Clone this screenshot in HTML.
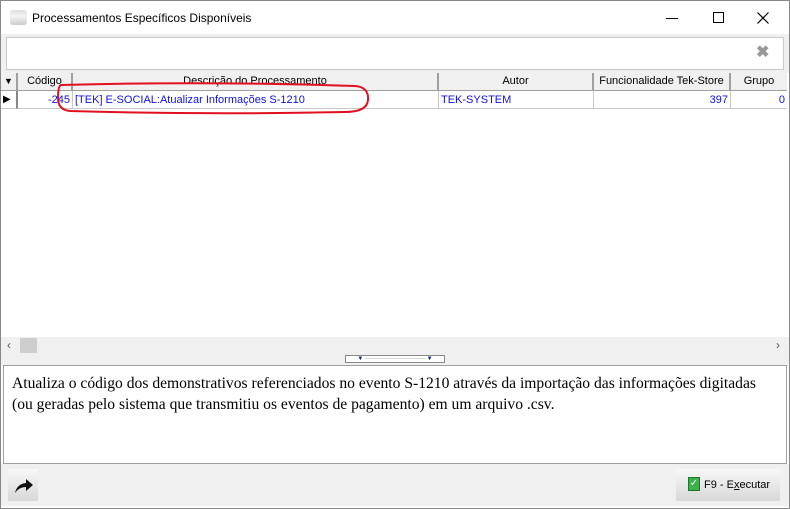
<!DOCTYPE html><html><head><style>
*{margin:0;padding:0;box-sizing:border-box}
body{width:790px;height:509px;background:#fff;font-family:"Liberation Sans",sans-serif;font-size:11px;position:relative;overflow:hidden}
.a{position:absolute}
.hd{position:absolute;top:73px;height:18px;background:#f0f0f0;border-right:2px solid #a0a0a0;text-align:center;line-height:17px;color:#000;font-size:11px;border-bottom:1px solid #a0a0a0}
.c{position:absolute;top:91px;height:18px;line-height:18px;color:#1010e0;border-right:1px solid #c8c8c8;border-bottom:1px solid #c8c8c8;padding:0 2px;white-space:nowrap;overflow:hidden}
</style></head><body>
<div class="a" style="left:0;top:0;width:790px;height:509px;border:1px solid #888"></div>
<div class="a" style="left:10px;top:10px;width:17px;height:15px;border-radius:3px;background:linear-gradient(#ddd,#f4f4f4 40%,#ccc)"></div>
<div class="a" style="left:32px;top:11px;font-size:12px;color:#000">Processamentos Específicos Disponíveis</div>
<div class="a" style="left:666px;top:18px;width:12px;height:1px;background:#000"></div>
<div class="a" style="left:713px;top:12px;width:11px;height:11px;border:1px solid #000"></div>
<svg class="a" style="left:757px;top:12px" width="12" height="12"><path d="M0.5 0.5L11.5 11.5M11.5 0.5L0.5 11.5" stroke="#000" stroke-width="1.2"/></svg>
<div class="a" style="left:1px;top:34px;width:788px;height:39px;background:#f0f0f0"></div>
<div class="a" style="left:6px;top:37px;width:778px;height:33px;background:#fff;border:1px solid #c8c8c8"></div>
<div class="a" style="left:756px;top:42px;font-size:16px;font-weight:bold;color:#999">✖</div>
<div class="hd" style="left:1px;width:17px;font-size:9px">▼</div>
<div class="hd" style="left:18px;width:55px">Código</div>
<div class="hd" style="left:73px;width:366px">Descrição do Processamento</div>
<div class="hd" style="left:439px;width:155px">Autor</div>
<div class="hd" style="left:594px;width:137px">Funcionalidade Tek-Store</div>
<div class="hd" style="left:731px;width:56px;border-right:none">Grupo</div>
<div class="c" style="left:1px;width:17px;color:#000;font-size:10px;border-right:2px solid #888">▶</div>
<div class="c" style="left:18px;width:55px;text-align:right">-245</div>
<div class="c" style="left:73px;width:366px">[TEK] E-SOCIAL:Atualizar Informações S-1210</div>
<div class="c" style="left:439px;width:155px">TEK-SYSTEM</div>
<div class="c" style="left:594px;width:137px;text-align:right">397</div>
<div class="c" style="left:731px;width:56px;text-align:right;border-right:none">0</div>
<svg class="a" style="left:55px;top:82px" width="318" height="34"><path d="M6 3 Q150 -1 300 4 Q314 5 313 18 Q312 30 290 30 Q150 33 15 29 Q3 28 3 16 Q3 4 6 3Z" fill="none" stroke="#e01020" stroke-width="2"/></svg>
<div class="a" style="left:1px;top:337px;width:788px;height:17px;background:#f0f0f0"></div>
<div class="a" style="left:7px;top:338px;font-size:12px;color:#555">‹</div>
<div class="a" style="left:20px;top:338px;width:17px;height:15px;background:#cdcdcd"></div>
<div class="a" style="left:776px;top:338px;font-size:12px;color:#555">›</div>
<div class="a" style="left:1px;top:354px;width:788px;height:12px;background:#f0f0f0"></div>
<div class="a" style="left:345px;top:355px;width:100px;height:8px;border:1px solid #888;background:#fff;font-size:6px;color:#0a1a7a;line-height:6px;text-align:center">▼ ······························ ▼</div>
<div class="a" style="left:3px;top:365px;width:784px;height:99px;border:1px solid #a0a0a0;background:#fff"></div>
<div class="a" style="left:12px;top:373px;font-family:'Liberation Serif',serif;font-size:15.6px;line-height:21px;color:#000;white-space:nowrap">Atualiza o código dos demonstrativos referenciados no evento S-1210 através da importação das informações digitadas<br>(ou geradas pelo sistema que transmitiu os eventos de pagamento) em um arquivo .csv.</div>
<div class="a" style="left:1px;top:464px;width:788px;height:42px;background:#f0f0f0"></div>
<div class="a" style="left:8px;top:469px;width:30px;height:32px;background:linear-gradient(#f8f8f8,#d8d8d8)"></div>
<svg class="a" style="left:13px;top:477px" width="22" height="18"><path d="M2 16 Q4 7 13 6 L13 2 L20 8 L13 14 L13 10 Q6 10 2 16Z" fill="#111"/></svg>
<div class="a" style="left:676px;top:469px;width:104px;height:32px;background:linear-gradient(#f8f8f8,#d8d8d8)"></div>
<div class="a" style="left:688px;top:477px;width:12px;height:14px;background:#3cb04a;border:1px solid #1a7a2a;color:#fff;font-size:10px;line-height:12px;text-align:center">✓</div>
<div class="a" style="left:704px;top:479px;font-size:11px;color:#000">F9 - E<u>x</u>ecutar</div>
</body></html>
